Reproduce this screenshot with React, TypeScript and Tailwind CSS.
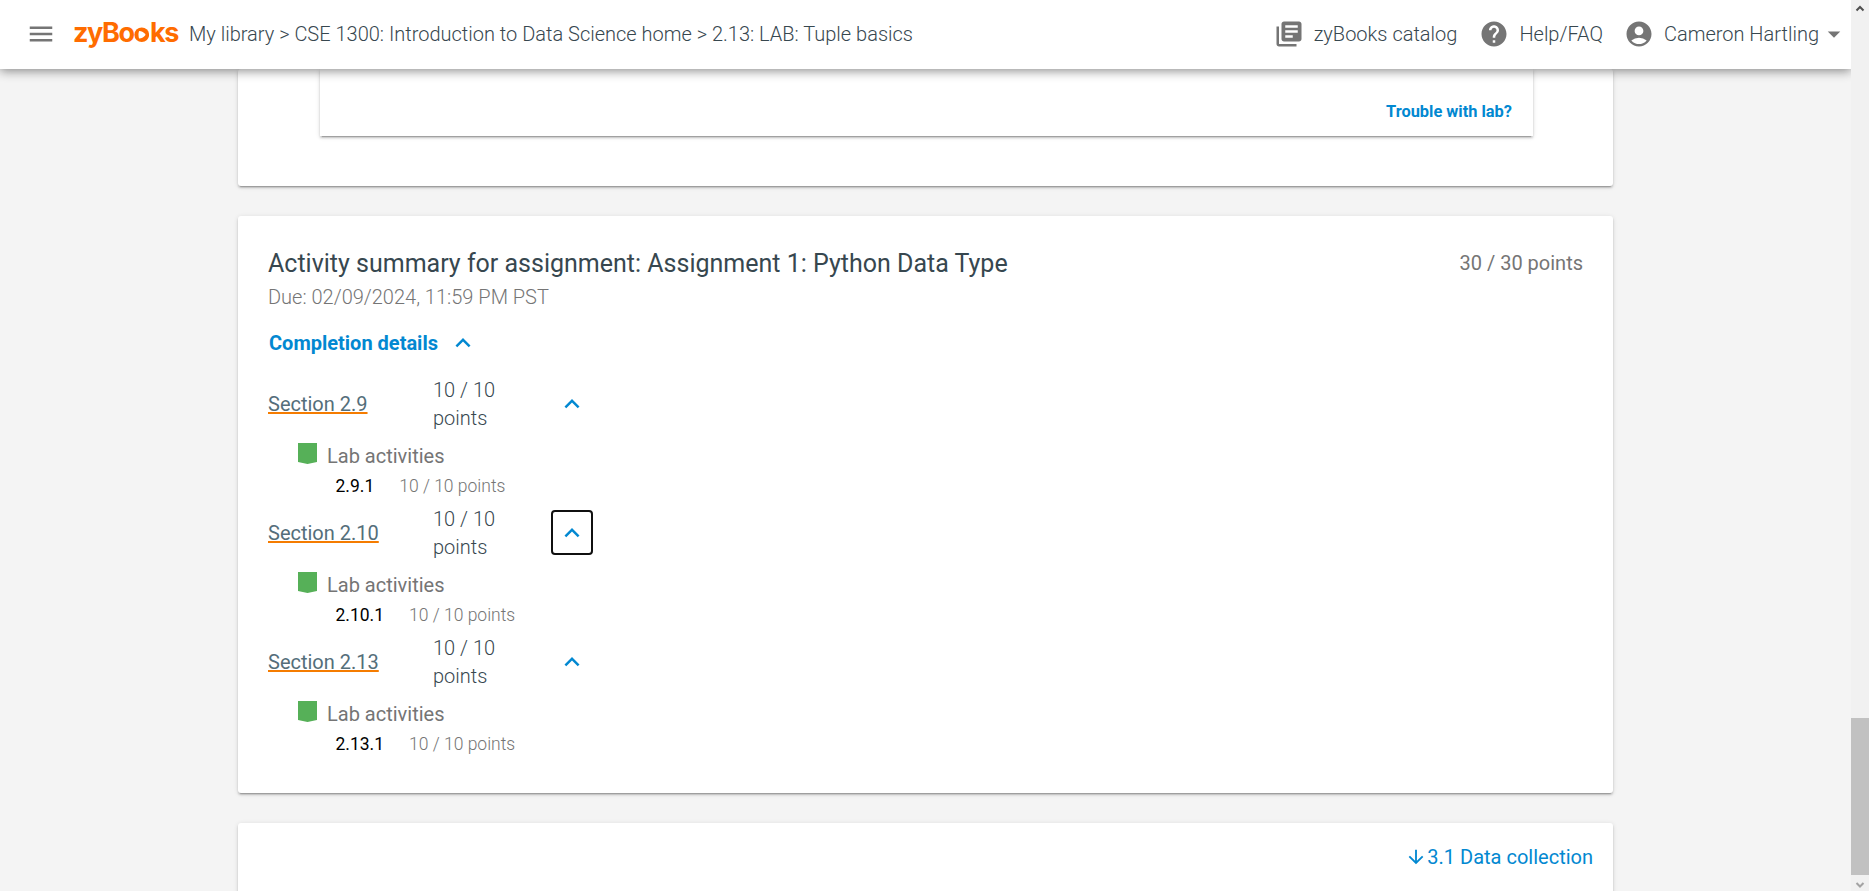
import React from "react";
import { MdMenu, MdLibraryBooks, MdHelp, MdAccountCircle, MdArrowDropDown, MdKeyboardArrowUp, MdArrowDownward } from "react-icons/md";

const sections = [
  { name: "Section 2.9", lab: "2.9.1", focused: false },
  { name: "Section 2.10", lab: "2.10.1", focused: true },
  { name: "Section 2.13", lab: "2.13.1", focused: false },
];

const card = "bg-white rounded-[3px] shadow-[0_3px_1px_-2px_rgba(0,0,0,0.2),0_2px_2px_rgba(0,0,0,0.16),0_1px_5px_rgba(0,0,0,0.12)]";

function Logo() {
  return (
    <div className="mb-[2px] flex h-[36px] w-[105px] shrink-0 font-[Inter] text-[27px] leading-[36px] font-bold tracking-[-1.4px] whitespace-nowrap text-[#ff6c00]">
      <span>zyBo</span>
      <svg className="mt-[12px] mr-px size-[15.5px] shrink-0" viewBox="0 0 16 16">
        <circle cx="8" cy="8" r="7.6" fill="currentColor" />
        <path d="M5.2 4.2C8 4.2 10.6 5.8 12 8C10.6 10.2 8 11.8 5.2 11.8C4.4 9.5 4.4 6.5 5.2 4.2Z" fill="white" />
      </svg>
      <span>ks</span>
    </div>
  );
}

function Header() {
  return (
    <header className="relative z-10 flex h-[69px] shrink-0 items-center bg-white pr-[2px] pb-px pl-[26px] text-[20px] font-light text-[#37474f] shadow-[0_2px_10px_rgba(0,0,0,0.45)]">
      <MdMenu className="size-[30px] text-[#757575]" />
      <div className="ml-[17px]"><Logo /></div>
      <nav className="ml-[11px] whitespace-nowrap">My library &gt; CSE 1300: Introduction to Data Science home &gt; 2.13: LAB: Tuple basics</nav>
      <div className="ml-auto flex items-center whitespace-nowrap">
        <MdLibraryBooks className="size-[30px] text-[#757575]" />
        <span className="ml-[10px]">zyBooks catalog</span>
        <MdHelp className="ml-[22px] size-[30px] text-[#757575]" />
        <span className="ml-[10px]">Help/FAQ</span>
        <MdAccountCircle className="ml-[21px] size-[30px] text-[#757575]" />
        <span className="ml-[10px]">Cameron Hartling</span>
        <MdArrowDropDown className="size-[30px] text-[#757575]" />
      </div>
    </header>
  );
}

function Section({ name, lab, focused }: { name: string; lab: string; focused: boolean }) {
  return (
    <div className="h-[129px]">
      <div className="flex h-[56px] items-center">
        <div className="w-[165px] text-[20px] leading-[28px] text-[#546e7a]">
          <a className="underline decoration-[#f57c00] decoration-2 underline-offset-[1px] [text-decoration-skip-ink:none]">{name}</a>
        </div>
        <div className="w-[100px] text-[20px] leading-[28px] font-light text-[#37474f]">10 / 10 points</div>
        <button className={focused ? "mb-px ml-[18px] flex h-[45px] w-[42px] items-center justify-center rounded-[4px] border-2 border-[#101010] text-[#0288d1]" : "mb-px ml-[18px] flex h-[45px] w-[42px] items-center justify-center text-[#0288d1]"}>
          <MdKeyboardArrowUp className="size-[30px] shrink-0" />
        </button>
      </div>
      <div className="flex h-[44px] items-center pl-[30px]">
        <svg className="mb-px h-[21px] w-[19px]" viewBox="0 0 19 21"><path d="M0 0H19V19L9.5 21L0 19Z" fill="#56b058" /></svg>
        <span className="mt-[4px] ml-[10px] text-[20px] text-[#757575]">Lab activities</span>
      </div>
      <div className="flex h-[20px] items-center pl-[67.5px] text-[17.5px]">
        <span className="text-black">{lab}</span>
        <span className="ml-[25px] font-light text-[#757575]">10 / 10 points</span>
      </div>
    </div>
  );
}

export default function App() {
  return (
    <div className="flex h-[891px] w-[1869px] overflow-hidden bg-[#f4f4f4] font-[Roboto,sans-serif]">
      <div className="flex min-w-0 flex-1 flex-col">
        <Header />
        <main className="flex flex-1 flex-col gap-[30px] px-[238px]">
          <section className={"h-[117px] shrink-0 pr-[80px] pl-[81.5px] " + card}>
            <div className="flex h-[66.5px] items-center justify-end bg-white pt-[20px] pr-[21px] text-[16.4px] font-bold text-[#0288d1] shadow-[0_3px_1px_-2px_rgba(0,0,0,0.2),0_2px_2px_rgba(0,0,0,0.16),0_1px_5px_rgba(0,0,0,0.12)]">
              Trouble with lab?
            </div>
          </section>
          <section className={"h-[577px] shrink-0 px-[30px] pt-[30px] " + card}>
            <div className="flex h-[36px] items-center justify-between">
              <h1 className="text-[25px] text-[#37474f]">Activity summary for assignment: Assignment 1: Python Data Type</h1>
              <span className="mb-[2px] text-[20px] text-[#757575]">30 / 30 points</span>
            </div>
            <p className="h-[30px] text-[20px] leading-[30px] font-light text-[#757575]">Due: 02/09/2024, 11:59 PM PST</p>
            <button className="mt-[16px] flex h-[30px] items-center pl-px text-[20px] font-bold text-[#0288d1]">
              Completion details
              <MdKeyboardArrowUp className="ml-[10px] size-[30px]" />
            </button>
            <div className="mt-[18px]">
              {sections.map((s) => <Section key={s.name} {...s} />)}
            </div>
          </section>
          <section className={"flex h-[100px] shrink-0 justify-end pt-[19px] pr-[20px] text-[20px] leading-[30px] text-[#0288d1] " + card}>
            <div className="flex h-[30px] items-center">
              <MdArrowDownward className="size-[22px]" />
              3.1 Data collection
            </div>
          </section>
        </main>
      </div>
      <div className="relative z-20 flex w-[18px] shrink-0 flex-col items-center bg-[#f1f1f1]">
        <svg className="h-[18px] w-[18px]" viewBox="0 0 18 18"><path d="M5.5 10.5L9 7L12.5 10.5" fill="none" stroke="#505050" strokeWidth="2" /></svg>
        <div className="mt-[700px] h-[157px] w-full bg-[#c1c1c1]" />
        <svg className="h-[16px] w-[18px]" viewBox="0 0 18 16"><path d="M5.5 8L9 11.5L12.5 8" fill="none" stroke="#a3a3a3" strokeWidth="2" /></svg>
      </div>
    </div>
  );
}
